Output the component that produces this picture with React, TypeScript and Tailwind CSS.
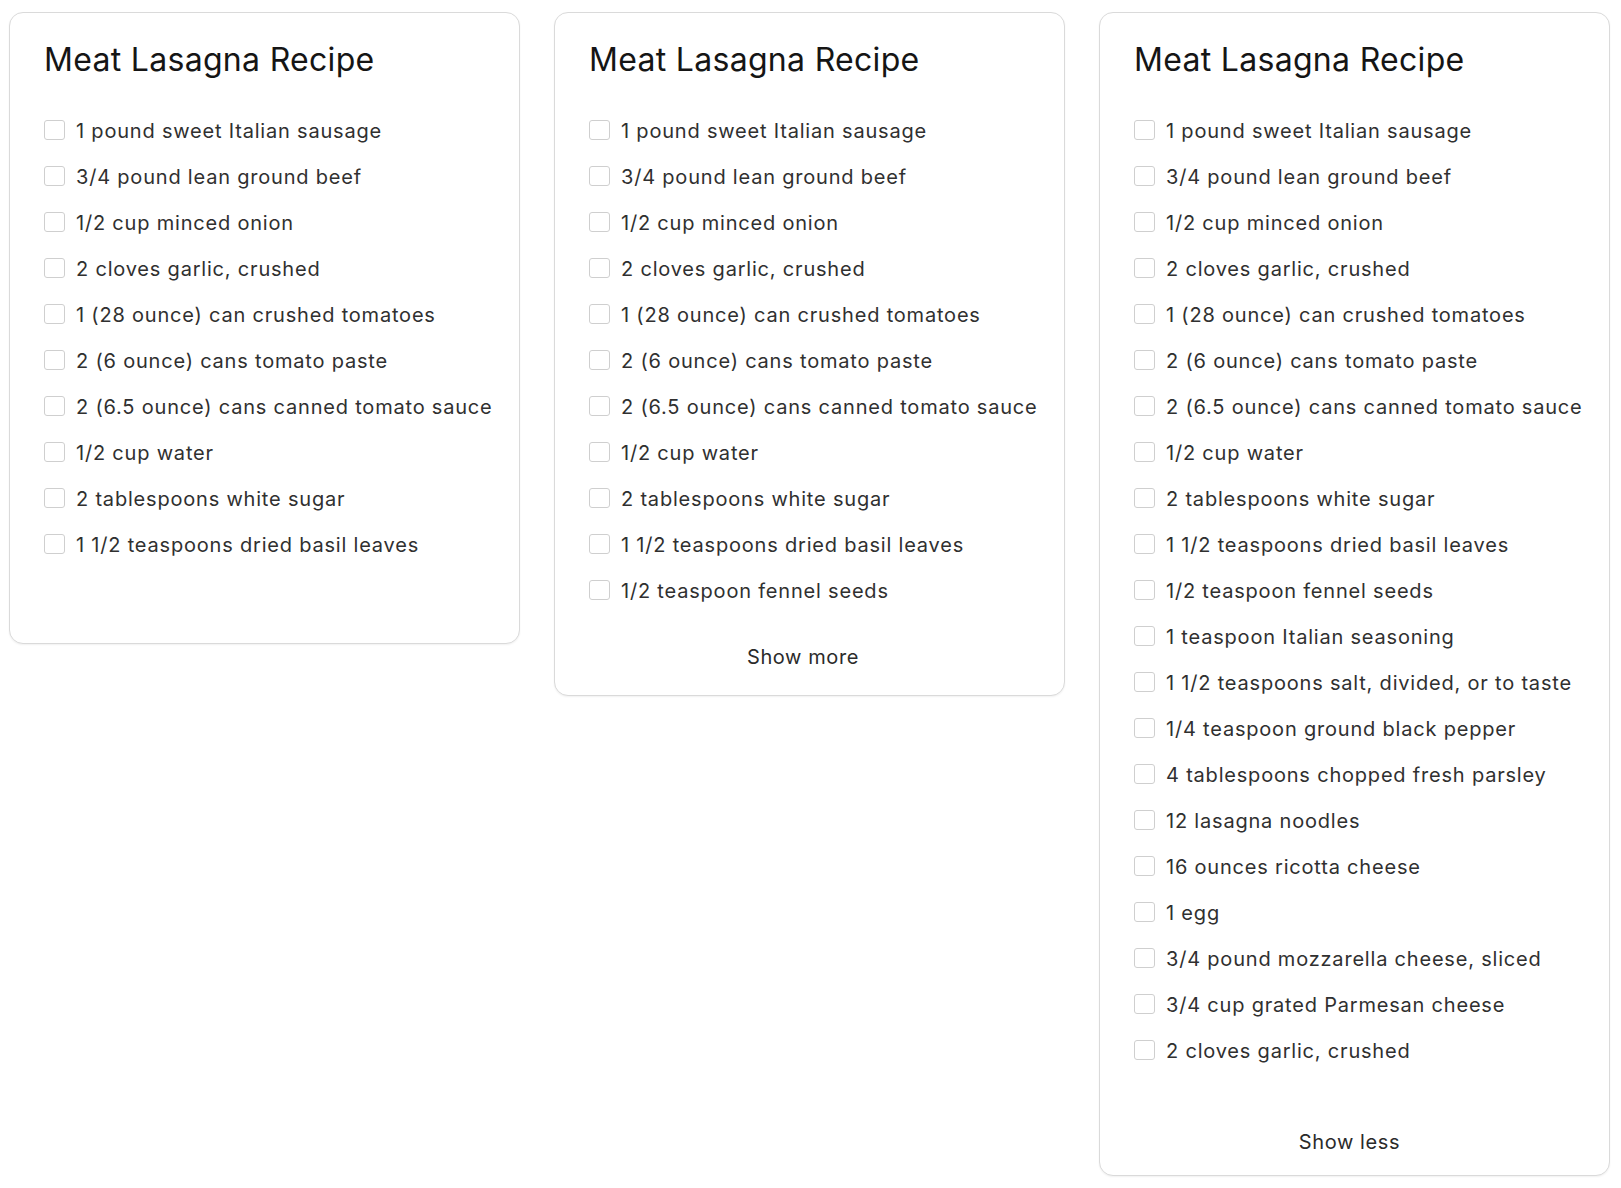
import React from "react";

const allIngredients = [
  "1 pound sweet Italian sausage",
  "3/4 pound lean ground beef",
  "1/2 cup minced onion",
  "2 cloves garlic, crushed",
  "1 (28 ounce) can crushed tomatoes",
  "2 (6 ounce) cans tomato paste",
  "2 (6.5 ounce) cans canned tomato sauce",
  "1/2 cup water",
  "2 tablespoons white sugar",
  "1 1/2 teaspoons dried basil leaves",
  "1/2 teaspoon fennel seeds",
  "1 teaspoon Italian seasoning",
  "1 1/2 teaspoons salt, divided, or to taste",
  "1/4 teaspoon ground black pepper",
  "4 tablespoons chopped fresh parsley",
  "12 lasagna noodles",
  "16 ounces ricotta cheese",
  "1 egg",
  "3/4 pound mozzarella cheese, sliced",
  "3/4 cup grated Parmesan cheese",
  "2 cloves garlic, crushed",
];

interface RecipeCardProps {
  items: string[];
  footer?: "more" | "less";
}

const RecipeCard: React.FC<RecipeCardProps> = ({ items, footer }) => {
  return (
    <div className="w-[511px] shrink-0 rounded-[14px] border border-[#dadada] bg-white pl-[34px] pr-[16px] pt-[27px] shadow-[0_1px_2px_rgba(0,0,0,0.06)]">
      <h2 className="text-[32px] leading-[40px] font-normal text-[#151515] tracking-[0.3px]">
        Meat Lasagna Recipe
      </h2>
      <ul className="mt-[27px]">
        {items.map((item, i) => (
          <li key={i} className="flex h-[46px] items-center gap-[11px]">
            <span className="h-[20px] w-[21px] shrink-0 rounded-[3px] border border-[#cfcfcf] bg-white" />
            <span className="whitespace-nowrap pt-[1px] text-[20px] leading-[24px] tracking-[0.8px] text-[#303030]">
              {item}
            </span>
          </li>
        ))}
      </ul>
      {footer === "more" && (
        <div className="mt-[24px] flex h-[40px] items-center justify-center pr-[31px] text-[20px] tracking-[0.6px] text-[#2b2b2b]">
          Show more
        </div>
      )}
      {footer === "less" && (
        <div className="mt-[49px] flex h-[40px] items-center justify-center pr-[28px] text-[20px] tracking-[0.6px] text-[#2b2b2b]">
          Show less
        </div>
      )}
      <div className={footer === "more" ? "h-[18px]" : footer === "less" ? "h-[13px]" : "h-[76px]"} />
    </div>
  );
};

export default function App() {
  return (
    <div
      className="flex min-h-[1188px] items-start gap-[34px] bg-white pl-[9px] pt-[12px]"
      style={{ fontFamily: "Inter, 'Noto Sans', sans-serif" }}
    >
      <RecipeCard items={allIngredients.slice(0, 10)} />
      <RecipeCard items={allIngredients.slice(0, 11)} footer="more" />
      <RecipeCard items={allIngredients} footer="less" />
    </div>
  );
}
